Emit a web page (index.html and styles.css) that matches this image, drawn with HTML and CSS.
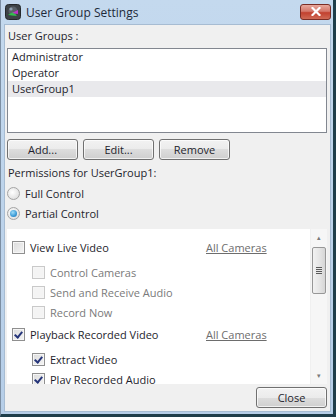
FILE: index.html
```html
<!DOCTYPE html>
<html>
<head>
    <title>User Group Settings</title>
    <meta charset="utf-8">
    <link rel="stylesheet" href="styles.css">
</head>
<body>
    <div class="window">
        <div class="titlebar">
            <div class="app-icon">
                <svg width="16" height="16" viewBox="0 0 16 16">
                    <rect x="0.5" y="0.5" width="15" height="15" rx="3" fill="#3d4246" stroke="#24282b"/>
                    <circle cx="8" cy="7" r="4.5" fill="#596068"/>
                    <path d="M3 11 L8 8 L12 12 Z" fill="#2fc24a"/>
                    <path d="M7 9 L13 6 L13 10 Z" fill="#c030c8"/>
                    <circle cx="6" cy="5" r="1.6" fill="#8fa0b0"/>
                </svg>
            </div>
            <span class="title">User Group Settings</span>
            <div class="close-x">
                <svg width="10" height="9" viewBox="0 0 10 9">
                    <path d="M1.5 1 L8.5 8 M8.5 1 L1.5 8" stroke="#fff" stroke-width="2.2" stroke-linecap="square"/>
                </svg>
            </div>
        </div>

        <div class="content">
            <div class="label">User Groups :</div>
            <div class="listbox">
                <div class="list-item">Administrator</div>
                <div class="list-item">Operator</div>
                <div class="list-item selected">UserGroup1</div>
            </div>

            <div class="btn-row">
                <button class="btn">Add...</button>
                <button class="btn">Edit...</button>
                <button class="btn">Remove</button>
            </div>

            <div class="label perm-label">Permissions for UserGroup1:</div>
            <div class="radio-row"><span class="radio"></span>Full Control</div>
            <div class="radio-row"><span class="radio checked"></span>Partial Control</div>

            <div class="perm-panel">
                <div class="perm-list">
                    <div class="perm-group">
                        <div class="perm-row">
                            <span class="check-label"><span class="check"></span>View Live Video</span>
                            <span class="cam-link">All Cameras</span>
                        </div>
                        <div class="sub-list">
                            <div class="perm-row disabled"><span class="check-label"><span class="check"></span>Control Cameras</span></div>
                            <div class="perm-row disabled"><span class="check-label"><span class="check"></span>Send and Receive Audio</span></div>
                            <div class="perm-row disabled"><span class="check-label"><span class="check"></span>Record Now</span></div>
                        </div>
                    </div>
                    <div class="perm-group">
                        <div class="perm-row">
                            <span class="check-label"><span class="check on"></span>Playback Recorded Video</span>
                            <span class="cam-link">All Cameras</span>
                        </div>
                        <div class="sub-list">
                            <div class="perm-row"><span class="check-label"><span class="check on"></span>Extract Video</span></div>
                            <div class="perm-row"><span class="check-label"><span class="check on"></span>Play Recorded Audio</span></div>
                        </div>
                    </div>
                </div>
                <div class="scrollbar">
                    <div class="arrow">&#9652;</div>
                    <div class="track">
                        <div class="thumb"><span class="grip"></span></div>
                    </div>
                    <div class="arrow">&#9662;</div>
                </div>
            </div>

            <div class="footer">
                <button class="btn">Close</button>
            </div>
        </div>
    </div>
</body>
</html>
```

FILE: styles.css
```css
body {
    margin: 0;
    font-family: 'Open Sans', 'Noto Sans', sans-serif;
    font-size: 11px;
    color: #1e1e2c;
    background: #fff;
}
.window {
    width: 336px;
    height: 417px;
    box-sizing: border-box;
    display: flex;
    flex-direction: column;
    background: linear-gradient(180deg, #c4d9ee 0%, #b6cee8 100%);
    border-left: 1px solid #7d8fa3;
    border-right: 3px solid #1f3e4a;
    border-bottom: 3px solid #1f3e4a;
    padding: 0 2px 2px 3px;
    overflow: hidden;
}
.titlebar {
    height: 24px;
    display: flex;
    align-items: center;
    flex-shrink: 0;
}
.app-icon {
    width: 16px;
    height: 16px;
    margin: 0 5px 0 1px;
}
.app-icon svg {
    display: block;
}
.title {
    font-size: 12px;
    color: #1e2a3a;
    flex: 1;
}
.close-x {
    width: 31px;
    height: 16px;
    margin-top: -1px;
    border: 1px solid #7a2d25;
    border-radius: 3px;
    background: linear-gradient(180deg, #e8a89c 0%, #d4776a 45%, #c2412f 55%, #cf6a55 100%);
    display: flex;
    align-items: center;
    justify-content: center;
    box-sizing: border-box;
}
.close-x svg {
    display: block;
}
.content {
    flex: 1;
    background: #f0f0f0;
    border: 1px solid #a7bcd2;
    padding: 3px 3px 0 2px;
    display: flex;
    flex-direction: column;
}
.label {
    height: 16px;
    line-height: 16px;
    padding-left: 1px;
    margin-bottom: 4px;
}
.listbox {
    height: 85px;
    box-sizing: border-box;
    background: #fff;
    border: 1px solid #828790;
}
.list-item {
    height: 16px;
    line-height: 16px;
    padding-left: 4px;
}
.list-item.selected {
    background: #e9e9ec;
}
.btn-row {
    display: flex;
    gap: 5px;
    margin-top: 6px;
}
.btn {
    width: 71px;
    height: 21px;
    box-sizing: border-box;
    font-family: inherit;
    font-size: 11px;
    color: #1e1e2c;
    border: 1px solid #707070;
    border-radius: 3px;
    background: linear-gradient(180deg, #f2f2f2 0%, #ebebeb 50%, #dddddd 50%, #cfcfcf 100%);
    padding: 0;
    box-shadow: inset 0 0 0 1px rgba(255,255,255,0.7);
}
.perm-label {
    margin-top: 5px;
    margin-bottom: 2px;
}
.radio-row {
    height: 20px;
    display: flex;
    align-items: center;
}
.radio {
    width: 11px;
    height: 11px;
    border-radius: 50%;
    border: 1px solid #a4a4a4;
    background: radial-gradient(circle at 40% 40%, #ffffff 0%, #e2e2e2 70%, #cfcfcf 100%);
    margin-right: 5px;
    position: relative;
}
.radio.checked::after {
    content: "";
    position: absolute;
    left: 2px;
    top: 2px;
    width: 7px;
    height: 7px;
    border-radius: 50%;
    background: radial-gradient(circle at 40% 35%, #9fdcf8 0%, #3a9ad6 60%, #1d6aa6 100%);
}
.perm-panel {
    margin-top: 6px;
    height: 155px;
    background: #fff;
    display: flex;
    overflow: hidden;
}
.perm-list {
    flex: 1;
    padding: 8px 0 0 5px;
}
.perm-group {
    margin-bottom: 2px;
}
.perm-row {
    height: 20px;
    display: grid;
    grid-template-columns: 194px auto;
    align-items: center;
}
.sub-list {
    margin-top: 5px;
    padding-left: 20px;
}
.sub-list .perm-row {
    grid-template-columns: 174px auto;
}
.check-label {
    display: flex;
    align-items: center;
    white-space: nowrap;
}
.check {
    width: 11px;
    height: 11px;
    border: 1px solid #8f8f8f;
    background: linear-gradient(135deg, #dcdcdc 0%, #f4f4f4 100%);
    box-shadow: inset 0 0 0 1px #f6f6f6;
    margin-right: 5px;
    position: relative;
    flex-shrink: 0;
}
.check.on::after {
    content: "";
    position: absolute;
    left: 3px;
    top: 1px;
    width: 3px;
    height: 6px;
    border: solid #26357a;
    border-width: 0 2px 2px 0;
    transform: rotate(40deg);
}
.disabled {
    color: #7a7a7a;
}
.disabled .check {
    border-color: #c9c9c9;
    background: #f4f4f4;
}
.cam-link {
    color: #6d6d6d;
    text-decoration: underline;
}
.scrollbar {
    width: 16px;
    background: #f6f6f6;
    display: flex;
    flex-direction: column;
    border-left: 1px solid #f0f0f0;
}
.arrow {
    height: 17px;
    font-size: 7px;
    color: #7a7a7a;
    text-align: center;
    line-height: 17px;
}
.track {
    flex: 1;
    padding-top: 1px;
}
.thumb {
    height: 45px;
    margin: 0 1px;
    border: 1px solid #979797;
    border-radius: 2px;
    background: linear-gradient(90deg, #f2f2f2 0%, #e6e6e6 50%, #d6d6d6 100%);
    display: flex;
    align-items: center;
    justify-content: center;
}
.grip {
    width: 6px;
    height: 7px;
    background: repeating-linear-gradient(180deg, #5a5a5a 0 1px, #e8e8e8 1px 2px);
}
.footer {
    display: flex;
    justify-content: flex-end;
    margin-top: 3px;
}
```
